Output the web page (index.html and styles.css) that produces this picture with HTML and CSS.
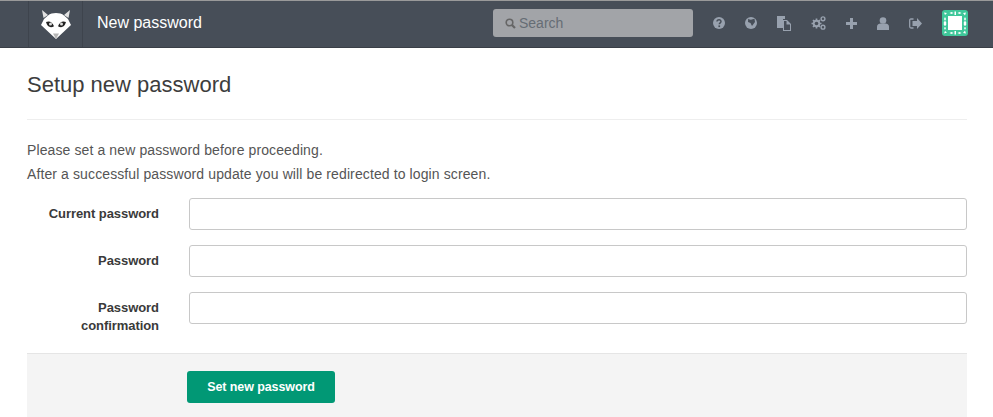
FILE: index.html
```html
<!DOCTYPE html>
<html lang="en">
<head>
<meta charset="utf-8">
<title>New password</title>
<link rel="stylesheet" href="styles.css">
</head>
<body>
<header class="navbar">
  <a class="logo" href="#" aria-label="GitLab">
    <svg width="32" height="30" viewBox="0 0 32 30">
      <path fill="#e2e2e2" d="M2 1l6 5-4.500 3zM30 1l-6 5 4.500 3z"/>
      <path fill="#fff" d="M16 4c3 0 6 .7 8 2.500L28 10l3 6-15 14L1 16l3-6 4-3.500C10 4.700 13 4 16 4z"/>
      <path fill="#b5b5b5" d="M16 30l-3-5.500h6z"/>
      <path fill="#222" d="M6 13c3.500-1.500 6.500 .3 8 4.200-3.200 2-6.700 1-8-4.200zM26 13c-3.500-1.500-6.500 .3-8 4.200 3.200 2 6.700 1 8-4.200z"/>
      <circle cx="10.500" cy="15" r="1.500" fill="#ddd"/>
      <circle cx="21.500" cy="15" r="1.500" fill="#ddd"/>
    </svg>
  </a>
  <div class="nav-title">New password</div>
  <div class="search">
    <svg class="search-icon" width="11" height="11" viewBox="0 0 11 11"><circle cx="4.500" cy="4.500" r="3.300" fill="none" stroke="#666" stroke-width="1.600"/><path d="M7 7l3 3" stroke="#666" stroke-width="2.200"/></svg>
    <span class="search-text">Search</span>
  </div>
  <nav class="nav-icons">
    <svg class="icon" width="12" height="12" viewBox="0 0 12 12"><circle cx="6" cy="6" r="6" fill="#98a1ae"/><path d="M4 4.600C4 2 8.200 2.200 8 4.600 8 6 6.300 5.800 6.300 7.300" fill="none" stroke="#474e58" stroke-width="1.500"/><rect x="5.400" y="8.400" width="1.700" height="1.700" fill="#474e58"/></svg>
    <svg class="icon" width="12" height="12" viewBox="0 0 12 12"><circle cx="6" cy="6" r="6" fill="#98a1ae"/><path d="M3.200 1.800C5 3 7 2.800 9.500 1.800L10 5 7 9 5.500 6 3 5z" fill="#474e58"/></svg>
    <svg class="icon" width="14" height="15" viewBox="0 0 14 15"><path fill="#98a1ae" d="M0 0h8v3H6v9H0z"/><path fill="#98a1ae" d="M6 4h4l4 4v7H6z"/><path fill="#474e58" d="M7 5h2.500v3.500H13V14H7z"/></svg>
    <svg class="icon" width="15" height="14" viewBox="0 0 15 14"><path d="M5.500 2.500v10M.5 7.500h10M2 4l7 7M9 4l-7 7" stroke="#98a1ae" stroke-width="1.700"/><circle cx="5.500" cy="7.500" r="3.800" fill="#98a1ae"/><circle cx="5.500" cy="7.500" r="1.800" fill="#474e58"/><circle cx="12" cy="2.800" r="1.900" fill="none" stroke="#98a1ae" stroke-width="1.400"/><circle cx="12" cy="11.200" r="1.900" fill="none" stroke="#98a1ae" stroke-width="1.400"/></svg>
    <svg class="icon" width="11" height="11" viewBox="0 0 11 11"><path d="M4 0h3v4h4v3H7v4H4V7H0V4h4z" fill="#98a1ae"/></svg>
    <svg class="icon" width="12" height="13" viewBox="0 0 12 13"><circle cx="6" cy="3.500" r="3.300" fill="#98a1ae"/><path d="M0 13V9.500C0 7.500 2 6.500 3.500 6.500h5c1.500 0 3.500 1 3.500 3V13z" fill="#98a1ae"/></svg>
    <svg class="icon" width="13" height="11" viewBox="0 0 13 11"><path d="M4.500 1H2C1 1 .7 1.700.7 2.500v6C.7 9.300 1 10 2 10h2.500" fill="none" stroke="#98a1ae" stroke-width="1.300"/><path d="M8 0l5 5.500L8 11V8H3.500V3H8z" fill="#98a1ae"/></svg>
    <svg class="avatar" width="26" height="26" viewBox="0 0 26 26">
      <rect width="26" height="26" rx="3" fill="#3fc79a"/>
      <rect x="6" y="6" width="14" height="14" fill="#fff"/>
      <path fill="#fff" d="M2 2.500l3 .5-2 2zM7.500 3l2-1 2 1-2 1zM12.500 1.500h1.500v3.500h-1.500zM15.500 3l2-1 2 1-2 1zM21 3l3-.5-1 3zM2 9l1-2 1 2-1 2zM1.800 12l1.200-1 1.200 1v3l-1.200 1-1.200-1zM2 18l1-1 1 1-1 2zM2 23.500l3-1-2-1.500zM7.500 23l2-1 2 1-2 1zM12.500 21h1.500v3.500h-1.500zM15.500 23l2-1 2 1-2 1zM21 23l3 .5-1-3zM22 9l1-2 1 2-1 2zM21.800 12l1.200-1 1.200 1v3l-1.200 1-1.200-1zM22 18l1-1 1 1-1 2z"/>
    </svg>
  </nav>
</header>

<main class="content">
  <h1 class="page-title">Setup new password</h1>
  <hr class="rule">
  <p class="intro">Please set a new password before proceeding.</p>
  <p class="intro">After a successful password update you will be redirected to login screen.</p>
  <form class="form">
    <div class="field">
      <label class="field-label" for="cur">Current password</label>
      <input class="field-input" id="cur" type="password">
    </div>
    <div class="field">
      <label class="field-label" for="pw">Password</label>
      <input class="field-input" id="pw" type="password">
    </div>
    <div class="field">
      <label class="field-label" for="conf">Password confirmation</label>
      <input class="field-input" id="conf" type="password">
    </div>
    <div class="actions">
      <button class="btn" type="button">Set new password</button>
    </div>
  </form>
</main>
</body>
</html>
```

FILE: styles.css
```css
* { box-sizing: border-box; }

html, body {
  margin: 0;
  padding: 0;
  height: 417px;
  overflow: hidden;
  background: #fff;
  font-family: "Liberation Sans", Arial, sans-serif;
  color: #555;
}

.navbar {
  height: 48px;
  display: flex;
  align-items: center;
  background: #474e58;
  border-top: 1px solid #9a9a9a;
  border-bottom: 1px solid #3a3f47;
  padding: 0 26px 0 28px;
}

.logo {
  width: 55px;
  height: 46px;
  display: flex;
  align-items: center;
  justify-content: center;
  border-left: 1px solid #3e444d;
  border-right: 1px solid #3e444d;
  flex: none;
}

.nav-title {
  margin-left: 14px;
  color: #fff;
  font-size: 16px;
  flex: 1;
  padding-bottom: 3px;
}

.search {
  width: 200px;
  height: 28px;
  margin-bottom: 2px;
  padding-left: 12px;
  display: flex;
  align-items: center;
  gap: 3px;
  background: #a2a4a8;
  border-radius: 3px;
  color: #666d75;
  font-size: 14px;
  flex: none;
}

.search-text { padding-bottom: 1px; }

.nav-icons {
  width: 274px;
  height: 28px;
  margin-bottom: 2px;
  padding-left: 20px;
  display: flex;
  align-items: center;
  flex: none;
}

.icon { flex: none; margin-right: 20px; }
.avatar { flex: none; }

.content {
  padding: 0 26px 0 27px;
}

.page-title {
  margin: 0;
  padding-top: 25px;
  height: 71px;
  font-size: 22px;
  font-weight: 400;
  line-height: 24px;
  color: #3d3d3d;
}

.rule {
  margin: 0;
  border: 0;
  border-top: 1px solid #eee;
}

.intro {
  margin: 0;
  font-size: 14px;
  line-height: 24px;
  letter-spacing: .11px;
  color: #555;
}

.intro:first-of-type { margin-top: 18px; }

.form { margin-top: 12px; }

.field {
  display: flex;
  align-items: flex-start;
  margin-bottom: 15px;
}

.field-label {
  width: 132px;
  padding-top: 7px;
  text-align: right;
  font-size: 13px;
  line-height: 18px;
  font-weight: 700;
  letter-spacing: -.06px;
  color: #3a3a3a;
  flex: none;
}

.field-input {
  margin-left: 30px;
  flex: 1;
  height: 32px;
  border: 1px solid #c8c8c8;
  border-radius: 3px;
  background: #fff;
}

.actions {
  height: 64px;
  margin-top: 18px;
  padding: 17px 0 0 160px;
  background: #f4f4f4;
  border-top: 1px solid #e5e5e5;
}

.btn {
  width: 148px;
  height: 32px;
  border: 0;
  border-radius: 3px;
  background: #019875;
  color: #fff;
  font: 700 12.5px "Liberation Sans", Arial, sans-serif;
  letter-spacing: -.1px;
}
```
